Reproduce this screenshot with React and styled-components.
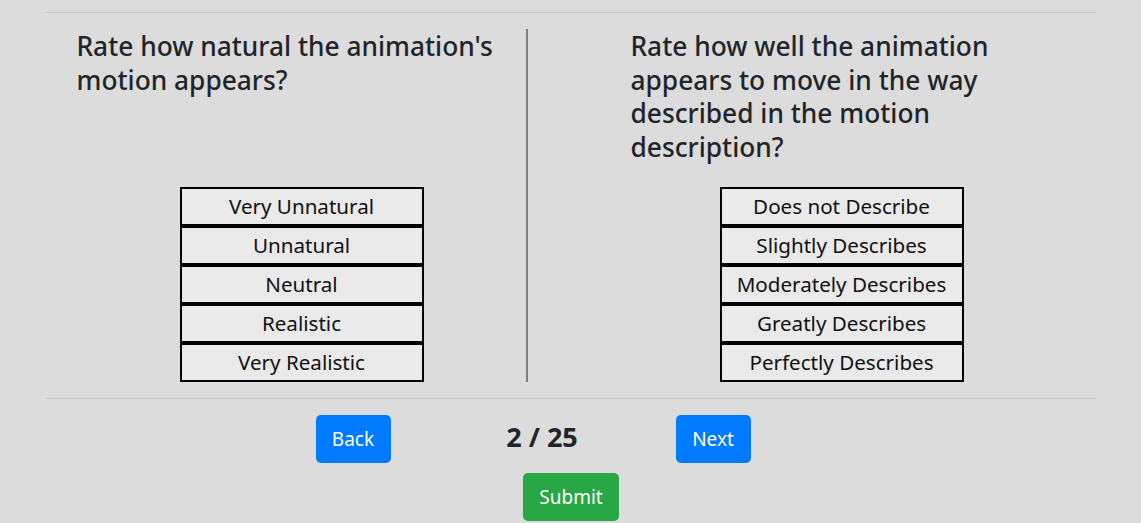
import React from "react";
import styled, { createGlobalStyle } from "styled-components";

const Global = createGlobalStyle`
  body {
    margin: 0;
    background: #dcdcdc;
    font-family: "Noto Sans", "Open Sans", sans-serif;
    color: #212529;
  }
  *, *::before, *::after { box-sizing: border-box; }
`;

const Page = styled.div`
  width: 1050px;
  margin: 0 auto;
  padding-top: 12px;
`;

const Rule = styled.hr`
  margin: 0;
  border: 0;
  border-top: 1px solid #c6c6c6;
`;

const Questions = styled.div`
  display: flex;
  margin: 16px 0 16px;
`;

const Column = styled.div`
  display: flex;
  flex-direction: column;
  width: ${(p) => (p.$left ? "482px" : "auto")};
  flex: ${(p) => (p.$left ? "none" : "1")};
  border-right: ${(p) => (p.$left ? "2px solid #7f7f7f" : "none")};
  padding-left: ${(p) => p.$indent}px;
`;

const Heading = styled.h3`
  margin: 1px 0 23px;
  max-width: 440px;
  font-size: 26.3px;
  font-weight: 500;
  line-height: 33.5px;
`;

const Scale = styled.div`
  margin-top: auto;
  margin-left: ${(p) => p.$offset}px;
  width: 244px;
  display: flex;
  flex-direction: column;
`;

const Option = styled.button`
  height: 39px;
  width: 100%;
  margin: 0;
  padding: 0;
  border: 2px solid #000;
  background: #eaeaea;
  color: #111;
  font-family: inherit;
  font-size: 20.6px;
  line-height: 1;
  cursor: pointer;
`;

const Nav = styled.div`
  display: flex;
  align-items: center;
  padding: 16px 0 0 270px;
`;

const Count = styled.div`
  width: 285px;
  padding-left: 18px;
  text-align: center;
  font-size: 27px;
  font-weight: 700;
  line-height: 1;
  margin-top: -5px;
`;

const Btn = styled.button`
  height: 48px;
  min-width: ${(p) => p.$w}px;
  padding: 0 14px;
  border: 0;
  border-radius: 5px;
  background: ${(p) => (p.$green ? "#28a745" : "#007bff")};
  color: #fff;
  font-family: inherit;
  font-size: 19px;
  cursor: pointer;
`;

const SubmitRow = styled.div`
  display: flex;
  justify-content: center;
  padding-top: 10px;
  margin-left: 1px;
`;

const naturalness = ["Very Unnatural", "Unnatural", "Neutral", "Realistic", "Very Realistic"];
const describes = [
  "Does not Describe",
  "Slightly Describes",
  "Moderately Describes",
  "Greatly Describes",
  "Perfectly Describes",
];

export default function App() {
  return (
    <>
      <Global />
      <Page>
        <Rule />
        <Questions>
          <Column $left $indent={31}>
            <Heading>Rate how natural the animation's motion appears?</Heading>
            <Scale $offset={103}>
              {naturalness.map((o) => (
                <Option key={o}>{o}</Option>
              ))}
            </Scale>
          </Column>
          <Column $indent={103}>
            <Heading>Rate how well the animation appears to move in the way described in the motion description?</Heading>
            <Scale $offset={89}>
              {describes.map((o) => (
                <Option key={o}>{o}</Option>
              ))}
            </Scale>
          </Column>
        </Questions>
        <Rule />
        <Nav>
          <Btn $w={75}>Back</Btn>
          <Count>2 / 25</Count>
          <Btn $w={75}>Next</Btn>
        </Nav>
        <SubmitRow>
          <Btn $w={96} $green>Submit</Btn>
        </SubmitRow>
      </Page>
    </>
  );
}
